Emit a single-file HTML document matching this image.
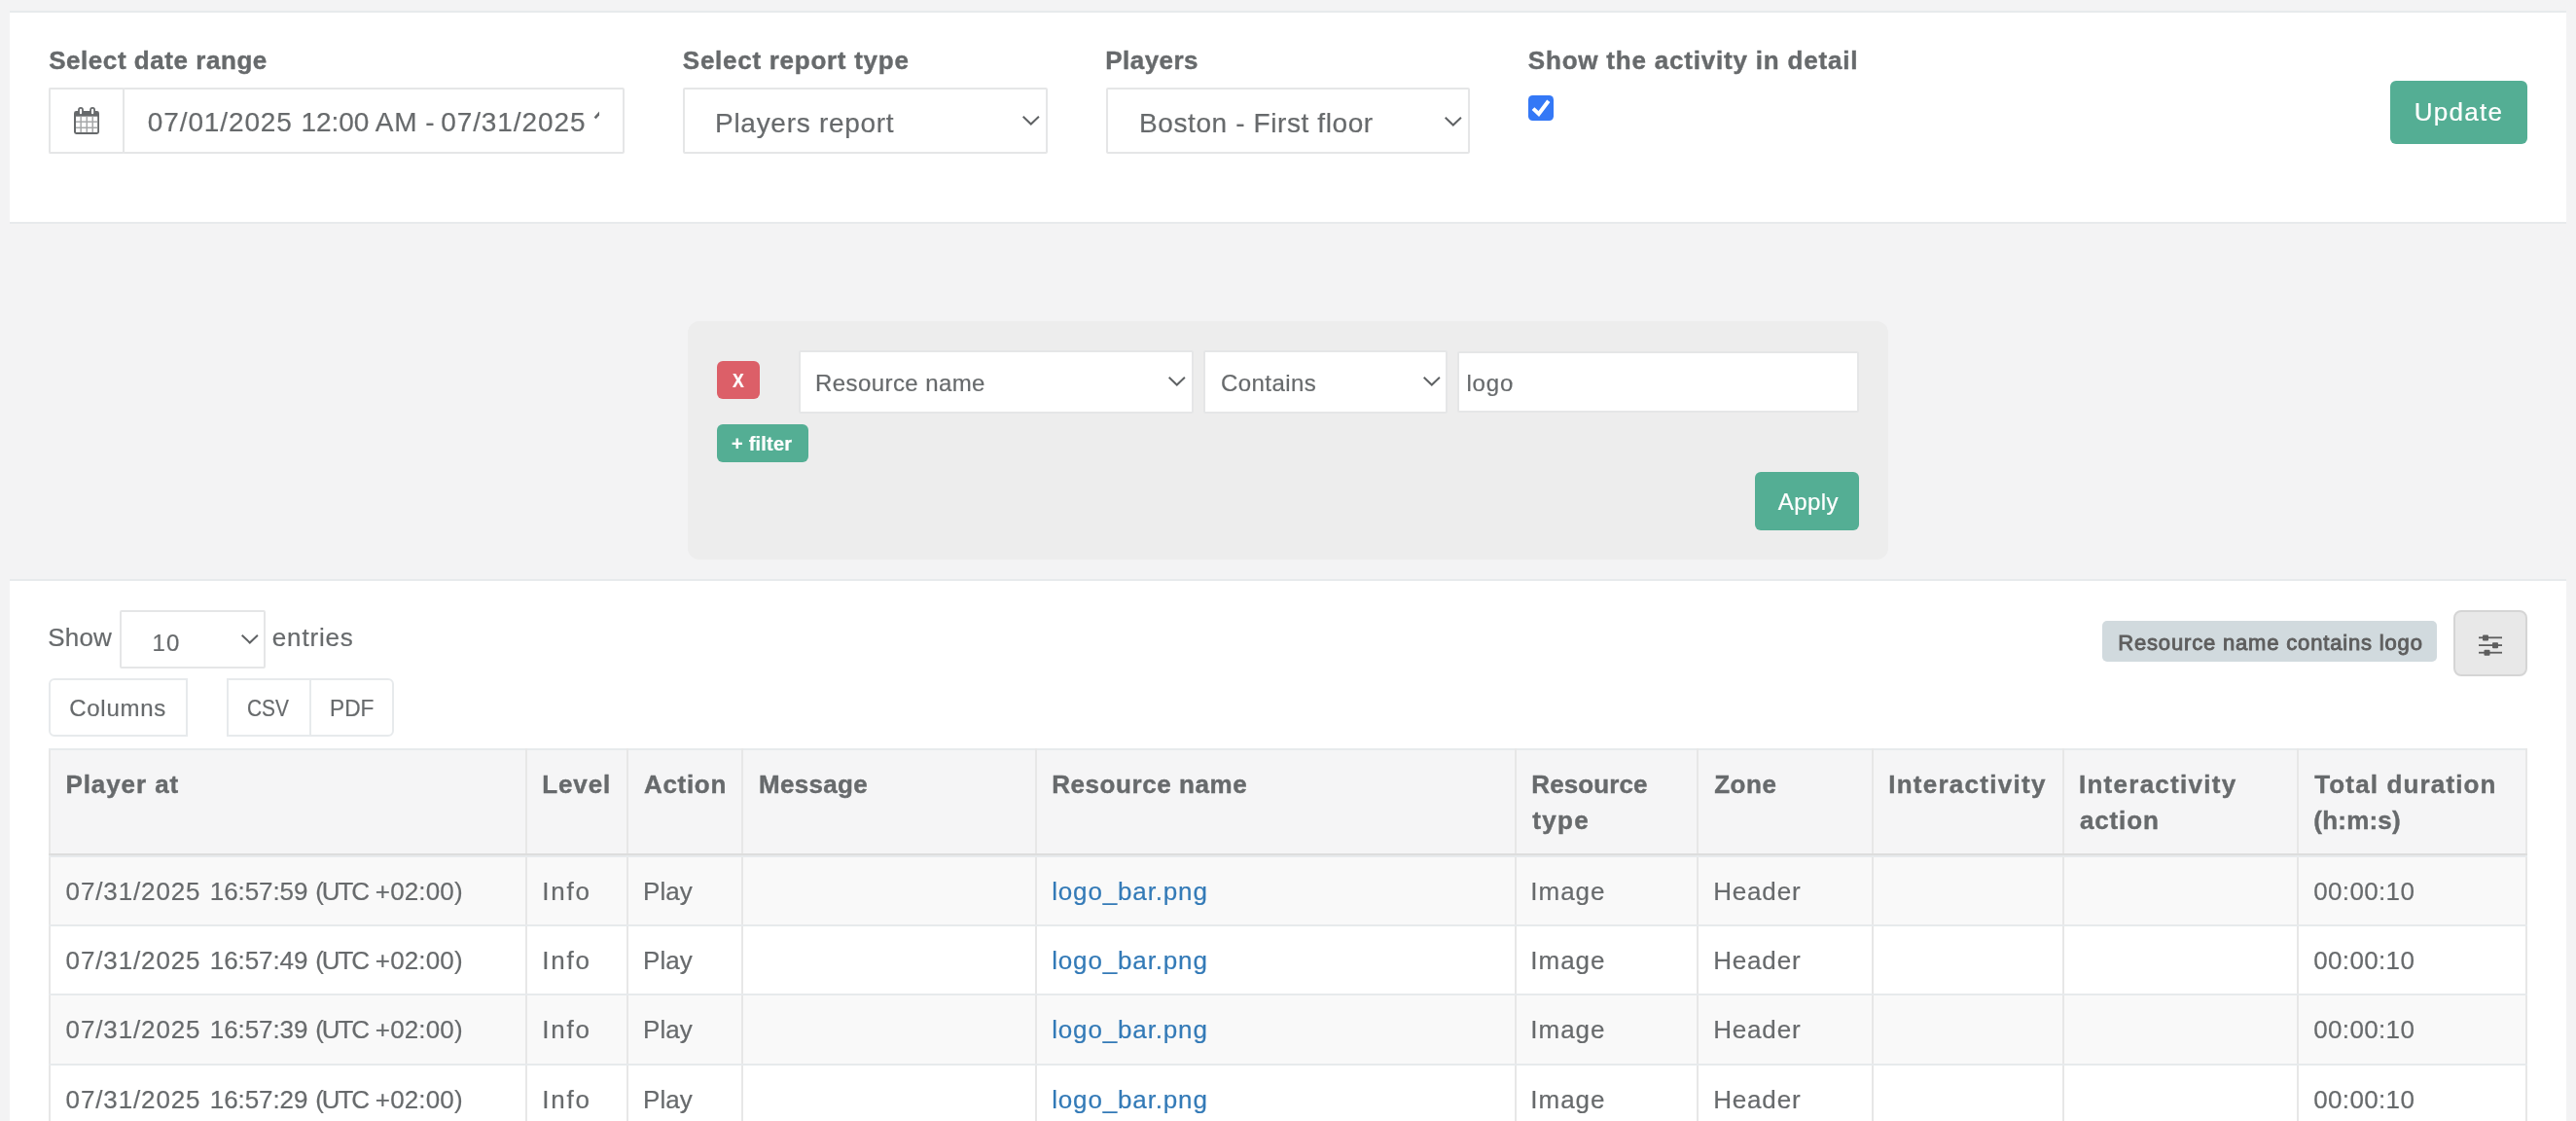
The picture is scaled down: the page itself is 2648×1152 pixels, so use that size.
<!DOCTYPE html>
<html><head><meta charset="utf-8">
<style>
*{box-sizing:border-box;margin:0;padding:0}
html,body{width:2648px;height:1152px;overflow:hidden;background:#f3f3f4;font-family:"Liberation Sans",sans-serif;color:#676a6c;font-size:26px;line-height:37.14px;-webkit-text-stroke:.2px #676a6c}
.abs{position:absolute}
.panel{position:absolute;left:10px;width:2628px;background:#fff;border-top:2px solid #e7eaec}
.lbl{position:absolute;top:44px;font-weight:700;font-size:26px;white-space:nowrap;-webkit-text-stroke:.4px #676a6c}
.fc{position:absolute;background:#fff;border:2px solid #e5e6e7;border-radius:2px;white-space:nowrap;overflow:hidden}
.fc28{font-size:28px;line-height:40px}
.fc24{font-size:24px;line-height:34px}
.btn{position:absolute;border-radius:6px;color:#fff;-webkit-text-stroke:.2px #fff;text-align:center;white-space:nowrap}
.green{background:#54ae94}
.wb{border-color:#e7eaec}
#tb{position:absolute;left:50px;top:769px;width:2546px;border-collapse:collapse;table-layout:fixed;font-size:26px;line-height:37.14px}
#tb th,#tb td{border:2px solid #e7e7e7;border-top-color:#e7eaec;border-bottom-color:#e7eaec;padding:16px 16px;text-align:left;vertical-align:top;white-space:nowrap;overflow:hidden}
#tb th{background:#f5f5f6;font-weight:700;-webkit-text-stroke:.4px #676a6c;border-bottom:4px solid #ddd;height:109px;padding-top:16.5px;padding-bottom:10px}
#tb td{height:71.5px;padding-top:17px;padding-bottom:12px}
#tb tr.o td{background:#f9f9f9}
#tb a{color:#337ab7;text-decoration:none;-webkit-text-stroke:.2px #337ab7}
</style></head><body><div id="wrap" style="position:absolute;left:0;top:0;width:2648px;height:1152px;will-change:transform;opacity:.999">
<div class="panel" style="top:11px;height:219px;border-bottom:2px solid #e7eaec"></div>

<div class="lbl" style="left:50px"><span id="l1" style="letter-spacing:0.55px;position:relative;left:0.2px">Select date range</span></div>
<div class="lbl" style="left:702px"><span id="l2" style="letter-spacing:0.73px;position:relative;left:-0.2px">Select report type</span></div>
<div class="lbl" style="left:1137px"><span id="l3" style="letter-spacing:0.47px;position:relative;left:-0.8px">Players</span></div>
<div class="lbl" style="left:1571px"><span id="l4" style="letter-spacing:0.80px;position:relative;left:-0.2px">Show the activity in detail</span></div>
<div class="fc" style="left:50px;top:90px;width:78px;height:68px;border-right:0"></div>
<svg class="abs" style="left:76px;top:110px" width="26" height="28" viewBox="0 0 26 28"><rect x="0" y="4" width="26" height="24" rx="2.4" fill="#66696b"/><rect x="2" y="9.7" width="22.2" height="16.2" fill="#fff"/><g fill="#a6a8a9"><rect x="6.4" y="9.7" width="1.5" height="16.2"/><rect x="12.5" y="9.7" width="1.5" height="16.2"/><rect x="18.5" y="9.7" width="1.5" height="16.2"/><rect x="2" y="14.4" width="22.2" height="1.5"/><rect x="2" y="20.5" width="22.2" height="1.5"/></g><g fill="#66696b"><rect x="4.1" y="0.1" width="5.8" height="7.8" rx="2.9"/><rect x="16.2" y="0.1" width="5.8" height="7.8" rx="2.9"/></g><g fill="#fff"><rect x="5.9" y="1.7" width="2.2" height="5.6" rx="1.1"/><rect x="18" y="1.7" width="2.2" height="5.6" rx="1.1"/></g></svg>
<div class="fc fc28" style="left:126px;top:90px;width:516px;height:68px;padding:14px 0 0 24px"><div style="width:464px;overflow:hidden"><span id="d1" style="letter-spacing:0.88px;position:relative;left:-0.2px">07/01/2025</span> <span id="d2" style="letter-spacing:-0.08px;position:relative;left:0.8px">12:00</span> <span id="d3" style="letter-spacing:0.90px;position:relative;left:-0.4px">AM</span> <span id="d4" style="letter-spacing:0.30px;position:relative;left:-0.5px">-</span> <span id="d5" style="letter-spacing:0.92px;position:relative;left:-2.0px">07/31/2025</span></div></div><svg class="abs" style="left:608px;top:112px" width="8" height="12" viewBox="0 0 8 12"><path d="M3.6 9.4 L9 3.4" stroke="#676a6c" stroke-width="2.7" fill="none"/></svg>
<div class="fc fc28" style="left:702px;top:90px;width:375px;height:68px;padding:15px 0 0 33px"><span id="t_pr" style="letter-spacing:0.72px;position:relative;left:-2.0px">Players report</span></div>
<svg class="abs" style="left:1050.3px;top:118.3px" width="20" height="12" viewBox="0 0 20 12"><path d="M1.7 1.8 L9.8 9.5 L17.9 1.8" fill="none" stroke="#5f6264" stroke-width="2"/></svg>
<div class="fc fc28" style="left:1137px;top:90px;width:374px;height:68px;padding:15px 0 0 33px"><span id="t_bf" style="letter-spacing:0.60px;position:relative;left:-1.0px">Boston - First floor</span></div>
<svg class="abs" style="left:1484.3px;top:118.5px" width="20" height="12" viewBox="0 0 20 12"><path d="M1.7 1.8 L9.8 9.5 L17.9 1.8" fill="none" stroke="#5f6264" stroke-width="2"/></svg>
<div class="abs" style="left:1571px;top:98px;width:26px;height:26px;border-radius:4.5px;background:#3478f6"></div>
<svg class="abs" style="left:1571px;top:98px" width="26" height="26" viewBox="0 0 26 26"><path d="M5 13.6 L10.8 19 L20.8 5.8" fill="none" stroke="#fff" stroke-width="4"/></svg>
<div class="btn green" style="left:2457px;top:83px;width:141px;height:65px;font-size:26px;line-height:65px"><span id="t_up" style="letter-spacing:1.28px;position:relative;left:0.0px">Update</span></div>
<div class="abs" style="left:707px;top:330px;width:1234px;height:245px;background:#ededed;border-radius:12px"></div>
<div class="btn" style="left:737px;top:371px;width:44px;height:39px;background:#dc5f68;font-weight:700;font-size:20px;line-height:41px"><span id="t_x" style="letter-spacing:0.00px;position:relative;left:0.9px;display:inline-block;transform:scaleX(0.880);transform-origin:0 50%">X</span></div>
<div class="fc fc24" style="left:821px;top:360px;width:406px;height:65px;padding:14.5px 0 0 17px"><span id="t_rn" style="letter-spacing:0.42px;position:relative;left:-2.0px">Resource name</span></div>
<svg class="abs" style="left:1200px;top:386px" width="20" height="12" viewBox="0 0 20 12"><path d="M1.7 1.8 L9.8 9.5 L17.9 1.8" fill="none" stroke="#5f6264" stroke-width="2"/></svg>
<div class="fc fc24" style="left:1237px;top:360px;width:251px;height:65px;padding:14.5px 0 0 17px"><span id="t_co" style="letter-spacing:0.43px;position:relative;left:-1.0px">Contains</span></div>
<svg class="abs" style="left:1461.6px;top:386px" width="20" height="12" viewBox="0 0 20 12"><path d="M1.7 1.8 L9.8 9.5 L17.9 1.8" fill="none" stroke="#5f6264" stroke-width="2"/></svg>
<div class="fc fc24" style="left:1498px;top:361px;width:413px;height:63px;padding:13.5px 0 0 9px"><span id="t_lo" style="letter-spacing:0.87px;position:relative;left:-1.6px">logo</span></div>
<div class="btn green" style="left:737px;top:436px;width:94px;height:39px;font-weight:700;font-size:20px;line-height:40px"><span id="t_pf" style="letter-spacing:0.20px;position:relative;left:-0.8px">+ filter</span></div>
<div class="btn green" style="left:1804px;top:485px;width:107px;height:60px;font-size:24px;line-height:61px"><span id="t_ap" style="letter-spacing:0.45px;position:relative;left:1.4px">Apply</span></div>
<div class="panel" style="top:595px;height:600px"></div>
<div class="abs" style="left:50px;top:637px;white-space:nowrap"><span id="t_sh" style="letter-spacing:0.20px;position:relative;left:-0.8px">Show</span></div>
<div class="fc fc24" style="left:123px;top:627px;width:149.5px;height:60px;padding:14.5px 0 0 34px"><span id="t_10" style="letter-spacing:1.20px;position:relative;left:-2.6px">10</span></div>
<svg class="abs" style="left:246.8px;top:651px" width="20" height="12" viewBox="0 0 20 12"><path d="M1.7 1.8 L9.8 9.5 L17.9 1.8" fill="none" stroke="#5f6264" stroke-width="2"/></svg>
<div class="abs" style="left:280px;top:637px;white-space:nowrap"><span id="t_en" style="letter-spacing:0.83px;position:relative;left:-0.2px">entries</span></div>
<div class="fc fc24 wb" style="left:50px;top:697px;width:143px;height:60px;border-radius:6px 0 0 6px;padding-top:11.5px;text-align:center"><span id="t_cl" style="letter-spacing:0.73px;position:relative;left:-0.4px">Columns</span></div>
<div class="fc fc24 wb" style="left:233px;top:697px;width:87px;height:60px;border-radius:0;padding-top:11.5px;text-align:center"><span id="t_csv" style="letter-spacing:0.00px;position:relative;left:2.3px;display:inline-block;transform:scaleX(0.870);transform-origin:0 50%">CSV</span></div>
<div class="fc fc24 wb" style="left:318px;top:697px;width:87px;height:60px;border-radius:0 6px 6px 0;padding-top:11.5px;text-align:center"><span id="t_pdf" style="letter-spacing:0.00px;position:relative;left:1.0px;display:inline-block;transform:scaleX(0.945);transform-origin:0 50%">PDF</span></div>
<div class="abs" style="left:2161px;top:638px;width:344px;height:42px;background:#d1dade;border-radius:5px;color:#5e5e5e;font-weight:400;-webkit-text-stroke:.9px #5e5e5e;font-size:22px;line-height:45px;text-align:center;white-space:nowrap"><span id="t_bd" style="letter-spacing:0.83px;position:relative;left:1.0px">Resource name contains logo</span></div>
<div class="abs" style="left:2522px;top:627px;width:76px;height:68px;background:#e8e8e8;border:2px solid #d5d5d5;border-radius:8px"></div>
<svg class="abs" style="left:2547px;top:651px" width="26" height="24" viewBox="0 0 26 24"><g fill="#5e5e5e"><rect x="1" y="3.4" width="24" height="1.8"/><rect x="1" y="11.2" width="24" height="1.8"/><rect x="1" y="18.8" width="24" height="1.8"/><rect x="5" y="1.4" width="6" height="6" rx="1"/><rect x="15" y="9.2" width="6" height="6" rx="1"/><rect x="6.5" y="16.8" width="6" height="6" rx="1"/></g></svg>
<table id="tb"><colgroup><col style="width:489.7px"><col style="width:104.3px"><col style="width:118.3px"><col style="width:301.7px"><col style="width:492.9px"><col style="width:187.1px"><col style="width:179.8px"><col style="width:196.4px"><col style="width:240.5px"><col style="width:235.3px"></colgroup><thead><tr><th><span id="h0" style="letter-spacing:0.92px;position:relative;left:-0.6px">Player at</span></th><th><span id="h1" style="letter-spacing:0.85px;position:relative;left:-0.4px">Level</span></th><th><span id="h2" style="letter-spacing:0.68px;position:relative;left:0.0px">Action</span></th><th><span id="h3" style="letter-spacing:0.33px;position:relative;left:-0.4px">Message</span></th><th><span id="h4" style="letter-spacing:0.58px;position:relative;left:-0.8px">Resource name</span></th><th><span id="h5a" style="letter-spacing:0.09px;position:relative;left:-0.6px">Resource</span><br><span id="h5b" style="letter-spacing:1.37px;position:relative;left:0.4px">type</span></th><th><span id="h6" style="letter-spacing:0.53px;position:relative;left:0.2px">Zone</span></th><th><span id="h7" style="letter-spacing:1.27px;position:relative;left:-0.6px">Interactivity</span></th><th><span id="h8a" style="letter-spacing:1.27px;position:relative;left:-1.2px">Interactivity</span><br><span id="h8b" style="letter-spacing:0.86px;position:relative;left:-0.2px">action</span></th><th><span id="h9a" style="letter-spacing:1.14px;position:relative;left:0.6px">Total duration</span><br><span id="h9b" style="letter-spacing:0.23px;position:relative;left:-0.4px">(h:m:s)</span></th></tr></thead><tbody><tr class="o"><td><span class="c0a" style="letter-spacing:0.86px;position:relative;left:-0.4px">07/31/2025</span> <span class="c0b" style="letter-spacing:-0.10px;position:relative;left:1.9px">16:57:59</span> <span class="c0c" style="letter-spacing:-2.10px;position:relative;left:2.6px">(UTC</span> <span class="c0d" style="letter-spacing:0.13px;position:relative;left:3.3px">+02:00)</span></td><td><span class="c1" style="letter-spacing:1.80px;position:relative;left:-0.4px">Info</span></td><td><span class="c2" style="letter-spacing:0.07px;position:relative;left:-1.0px">Play</span></td><td></td><td><a class="c4" style="letter-spacing:0.85px;position:relative;left:-0.8px">logo_bar.png</a></td><td><span class="c5" style="letter-spacing:1.00px;position:relative;left:-1.6px">Image</span></td><td><span class="c6" style="letter-spacing:0.84px;position:relative;left:-0.8px">Header</span></td><td></td><td></td><td><span class="c9" style="letter-spacing:0.34px;position:relative;left:-0.4px">00:00:10</span></td></tr><tr><td><span class="c0a" style="letter-spacing:0.86px;position:relative;left:-0.4px">07/31/2025</span> <span class="c0b" style="letter-spacing:-0.10px;position:relative;left:1.9px">16:57:49</span> <span class="c0c" style="letter-spacing:-2.10px;position:relative;left:2.6px">(UTC</span> <span class="c0d" style="letter-spacing:0.13px;position:relative;left:3.3px">+02:00)</span></td><td><span class="c1" style="letter-spacing:1.80px;position:relative;left:-0.4px">Info</span></td><td><span class="c2" style="letter-spacing:0.07px;position:relative;left:-1.0px">Play</span></td><td></td><td><a class="c4" style="letter-spacing:0.85px;position:relative;left:-0.8px">logo_bar.png</a></td><td><span class="c5" style="letter-spacing:1.00px;position:relative;left:-1.6px">Image</span></td><td><span class="c6" style="letter-spacing:0.84px;position:relative;left:-0.8px">Header</span></td><td></td><td></td><td><span class="c9" style="letter-spacing:0.34px;position:relative;left:-0.4px">00:00:10</span></td></tr><tr class="o"><td><span class="c0a" style="letter-spacing:0.86px;position:relative;left:-0.4px">07/31/2025</span> <span class="c0b" style="letter-spacing:-0.10px;position:relative;left:1.9px">16:57:39</span> <span class="c0c" style="letter-spacing:-2.10px;position:relative;left:2.6px">(UTC</span> <span class="c0d" style="letter-spacing:0.13px;position:relative;left:3.3px">+02:00)</span></td><td><span class="c1" style="letter-spacing:1.80px;position:relative;left:-0.4px">Info</span></td><td><span class="c2" style="letter-spacing:0.07px;position:relative;left:-1.0px">Play</span></td><td></td><td><a class="c4" style="letter-spacing:0.85px;position:relative;left:-0.8px">logo_bar.png</a></td><td><span class="c5" style="letter-spacing:1.00px;position:relative;left:-1.6px">Image</span></td><td><span class="c6" style="letter-spacing:0.84px;position:relative;left:-0.8px">Header</span></td><td></td><td></td><td><span class="c9" style="letter-spacing:0.34px;position:relative;left:-0.4px">00:00:10</span></td></tr><tr><td><span class="c0a" style="letter-spacing:0.86px;position:relative;left:-0.4px">07/31/2025</span> <span class="c0b" style="letter-spacing:-0.10px;position:relative;left:1.9px">16:57:29</span> <span class="c0c" style="letter-spacing:-2.10px;position:relative;left:2.6px">(UTC</span> <span class="c0d" style="letter-spacing:0.13px;position:relative;left:3.3px">+02:00)</span></td><td><span class="c1" style="letter-spacing:1.80px;position:relative;left:-0.4px">Info</span></td><td><span class="c2" style="letter-spacing:0.07px;position:relative;left:-1.0px">Play</span></td><td></td><td><a class="c4" style="letter-spacing:0.85px;position:relative;left:-0.8px">logo_bar.png</a></td><td><span class="c5" style="letter-spacing:1.00px;position:relative;left:-1.6px">Image</span></td><td><span class="c6" style="letter-spacing:0.84px;position:relative;left:-0.8px">Header</span></td><td></td><td></td><td><span class="c9" style="letter-spacing:0.34px;position:relative;left:-0.4px">00:00:10</span></td></tr></tbody></table>
<div class="abs" style="left:50px;top:879px;width:2548px;height:2px;background:#e7eaec"></div>
</div></body></html>
